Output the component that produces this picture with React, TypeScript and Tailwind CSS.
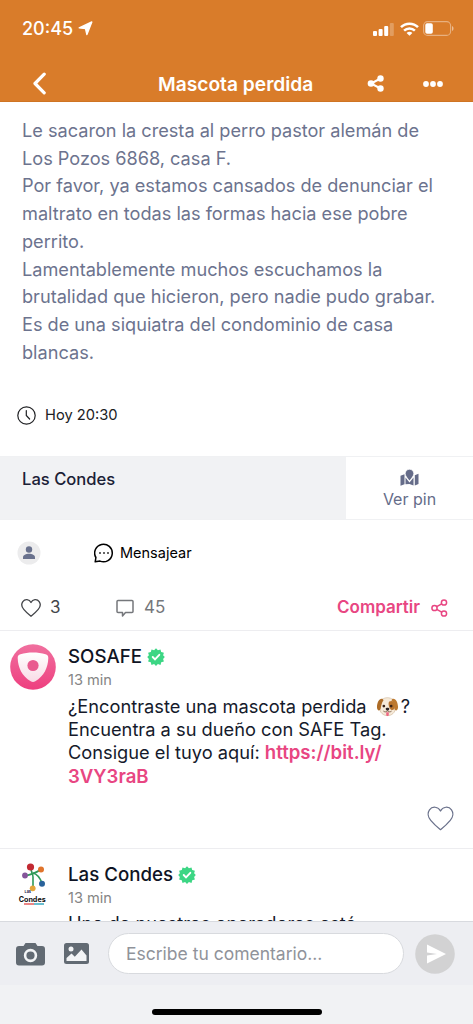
import type { ReactNode } from "react";

const postLines = [
  "Le sacaron la cresta al perro pastor alemán de",
  "Los Pozos 6868, casa F.",
  "Por favor, ya estamos cansados de denunciar el",
  "maltrato en todas las formas hacia ese pobre",
  "perrito.",
  "Lamentablemente muchos escuchamos la",
  "brutalidad que hicieron, pero nadie pudo grabar.",
  "Es de una siquiatra del condominio de casa",
  "blancas.",
];

function StatusBar() {
  return (
    <div className="flex h-[57px] items-center justify-between pl-[22px] pr-[19px]">
      <div className="flex items-center gap-[5px]">
        <span className="text-[18px] font-medium leading-6">20:45</span>
        <svg width="15" height="15" viewBox="0 0 15 15" fill="currentColor" stroke="currentColor" strokeWidth="1.4" strokeLinejoin="round">
          <path d="M13.800 1 8.900 13.600 7.500 7.600 1.200 6.900Z" />
        </svg>
      </div>
      <div className="flex items-center">
        <svg width="22" height="14" viewBox="0 0 22 14" fill="currentColor">
          <rect x="0" y="9" width="4" height="5" rx="1" />
          <rect x="5.6" y="7" width="4" height="7" rx="1" />
          <rect x="11.2" y="4" width="4" height="10" rx="1" />
          <rect x="16.8" y="1" width="4" height="13" rx="1" opacity=".25" />
        </svg>
        <svg className="ml-[5px]" width="19" height="14" viewBox="0 0 19 14" fill="none" stroke="currentColor" strokeWidth="2.5">
          <path d="M1 5.200a12 12 0 0 1 17 0" />
          <path d="M4.100 8.700a7.600 7.600 0 0 1 10.800 0" />
          <path d="M9.500 13.800 6.600 10.900a4 4 0 0 1 5.800 0Z" fill="currentColor" stroke="none" />
        </svg>
        <svg className="ml-[4px]" width="31" height="15" viewBox="0 0 31 15">
          <rect x=".6" y=".6" width="27" height="13.8" rx="4" fill="none" stroke="white" strokeOpacity=".4" strokeWidth="1.1" />
          <rect x="2.3" y="2.3" width="7.5" height="10.4" rx="1.8" fill="white" />
          <path d="M29 5v5c2-.8 2-4.200 0-5Z" fill="white" opacity=".5" />
        </svg>
      </div>
    </div>
  );
}

function Header() {
  return (
    <header className="h-[102px] shrink-0 border-b border-[#cf7423] bg-[#d97c2a] text-white">
      <StatusBar />
      <div className="flex h-[44px] items-center pl-[32px] pt-[9px]">
        <svg width="15" height="23" viewBox="0 0 15 23" fill="none" stroke="currentColor" strokeWidth="3.2" strokeLinecap="round" strokeLinejoin="round">
          <path d="M12.200 2.200 3 11.500l9.200 9.300" />
        </svg>
        <h1 className="ml-[111px] w-[156px] whitespace-nowrap text-[19.2px] font-semibold leading-6">
          Mascota perdida
        </h1>
        <svg className="ml-[53px]" width="18" height="17" viewBox="0 0 18 17" fill="currentColor" stroke="currentColor">
          <path d="M13.500 3.500 4 8.500l9.500 5" fill="none" strokeWidth="2" />
          <circle cx="13.500" cy="3.500" r="3.200" stroke="none" />
          <circle cx="4" cy="8.500" r="3.300" stroke="none" />
          <circle cx="13.500" cy="13.500" r="3.200" stroke="none" />
        </svg>
        <svg className="ml-[38px]" width="20" height="6" viewBox="0 0 20 6" fill="currentColor">
          <circle cx="3" cy="3" r="2.900" />
          <circle cx="10" cy="3" r="2.900" />
          <circle cx="17" cy="3" r="2.900" />
        </svg>
      </div>
    </header>
  );
}

function Verified() {
  return (
    <svg width="18" height="18" viewBox="0 0 18 18">
      <path
        d="m9 .3 1.900 2 2.600-.9.700 2.700 2.700.7-.8 2.500 1.700 1.700-1.700 2 .8 2.500-2.700.7-.7 2.700-2.600-.8-1.900 1.800-1.900-1.800-2.600.8-.7-2.700-2.700-.7.800-2.500L.2 9l1.700-1.700-.8-2.500 2.700-.7.700-2.700 2.600.9Z"
        fill="#3cd684"
      />
      <path d="m5.700 9 2.300 2.300 4.300-4.500" fill="none" stroke="white" strokeWidth="1.900" strokeLinecap="round" />
    </svg>
  );
}

function DogFace() {
  return (
    <svg className="ml-[4px] mr-[2px] inline-block align-[-4px]" width="23" height="20" viewBox="0 0 24 22" role="img">
      <path d="M6 3c3-3 9-3 12 0 2 2 2 6 2.500 9 .5 5-4 8.500-8.500 8.500S3 17 3.500 12C4 9 4 5 6 3Z" fill="#f6ead9" stroke="#c9ad8d" strokeWidth=".6" />
      <path d="M14 5c4-2 6 1 6 5s-2 5-4 4-4-7-2-9Z" fill="#b8742f" />
      <path d="M6.500 2C3 1 .5 6 .4 11c0 4 3 5 4 2 .7-3 1-7 3.200-9.500Z" fill="#ad6c27" />
      <path d="M17.500 2c3.500-1 6 4 6.100 9 0 4-3 5-4 2-.7-3-1-7-3.200-9.500Z" fill="#bd7a31" />
      <circle cx="8" cy="10" r="1.500" fill="#392318" />
      <circle cx="16" cy="10" r="1.500" fill="#392318" />
      <path d="M10 13c0-1.600 4-1.600 4 0 0 1.200-1.200 2.200-2 2.200s-2-1-2-2.200Z" fill="#2d2425" />
      <path d="M7.500 15.500c2 1.500 3.500.8 4.500-.2 1 1 2.500 1.700 4.500.2" fill="none" stroke="#6b4a35" strokeWidth=".9" />
      <path d="M10.600 16.800h2.800v2.800c0 1.800-2.800 1.800-2.800 0Z" fill="#ee6583" />
    </svg>
  );
}

function SosafeLogo() {
  return (
    <svg width="46" height="46" viewBox="0 0 46 46">
      <defs>
        <linearGradient id="pink" x1="0" y1="0" x2="0" y2="1">
          <stop offset="0" stopColor="#f0709f" />
          <stop offset="1" stopColor="#ee3f7f" />
        </linearGradient>
        <linearGradient id="shield" x1="0" y1="0" x2="0" y2="1">
          <stop offset="0" stopColor="#ffffff" />
          <stop offset="1" stopColor="#f9dbe6" />
        </linearGradient>
      </defs>
      <circle cx="23" cy="23" r="22.800" fill="url(#pink)" />
      <path
        d="M10.500 10.300C18 8 28 8 35.500 10.300c2 .6 2.800 1.700 2.800 3.700C38 24 34 32 25.300 37.300c-1.600 1-3 1-4.600 0C12 32 8 24 7.700 14c0-2 .8-3.100 2.800-3.700Z"
        fill="url(#shield)"
      />
      <circle cx="23" cy="21.500" r="5.600" fill="#e95b8f" />
    </svg>
  );
}

function LasCondesLogo() {
  return (
    <svg width="30" height="43" viewBox="0 0 30 43">
      <g fill="none" stroke="#2f9a58" strokeWidth="1.600">
        <path d="M13 5c0 4 2 6 2 9v11" />
        <path d="M7 13c4-1 11-3 15-6" />
        <path d="M15 10c4 1 7 5 9 10" />
      </g>
      <circle cx="12.500" cy="4" r="3.600" fill="#c22932" />
      <circle cx="23" cy="6.500" r="3" fill="#e0742c" />
      <circle cx="7" cy="12.500" r="2.900" fill="#85559a" />
      <circle cx="24" cy="20.800" r="3" fill="#29629a" />
      <circle cx="14.700" cy="25.300" r="2.900" fill="#e5a53a" />
      <text x="6.500" y="30.300" fontSize="3.800" fontWeight="700" fill="#252548" fontFamily="Inter, sans-serif">Las</text>
      <text x=".7" y="38.500" fontSize="7" fontWeight="700" fill="#111" textLength="27" lengthAdjust="spacingAndGlyphs" fontFamily="Inter, sans-serif">Condes</text>
      <path d="M6 41h10" stroke="#e45c5c" strokeWidth="1.500" />
      <path d="M16 41h10" stroke="#38a9c0" strokeWidth="1.500" />
    </svg>
  );
}

function Heart({ size }: { size: number }) {
  return (
    <svg width={size} height={size} viewBox="0 0 26 26" fill="none" stroke="currentColor" strokeLinejoin="round">
      <path
        d="M13 5.800C10.800 1.300 5 1 2.400 4.600c-2.200 3.200-1.300 7.400 1.200 10.200C6 17.700 9.400 20.900 13 23.800c3.600-2.900 7-6.100 9.400-9 2.500-2.800 3.400-7 1.200-10.200C21 1 15.200 1.300 13 5.800Z"
        strokeWidth={size > 20 ? 1.2 : 1.7}
      />
    </svg>
  );
}

interface CommentProps {
  name: string;
  logo: ReactNode;
  children: ReactNode;
}

function Comment({ name, logo, children }: CommentProps) {
  return (
    <div className="flex">
      <div className="w-[68px] shrink-0">{logo}</div>
      <div className="pt-[13px]">
        <div className="flex h-[26px] items-center gap-[5px]">
          <span className="whitespace-nowrap text-[18.7px] font-[550] text-[#0f1424]">{name}</span>
          <Verified />
        </div>
        <p className="text-[14.6px] leading-5 text-[#858585]">13 min</p>
        {children}
      </div>
    </div>
  );
}

export default function App() {
  return (
    <div className="flex h-[1024px] w-[473px] flex-col overflow-hidden bg-white font-['Inter',sans-serif]">
      <Header />

      <main className="h-[819px] shrink-0 overflow-hidden">
        {/* Post text */}
        <div className="h-[281px] whitespace-nowrap pl-[22px] pt-[15px] text-[18.15px] leading-[27.7px] text-[#6c738e]">
          {postLines.map((line) => (
            <p key={line}>{line}</p>
          ))}
        </div>

        <div className="flex h-[65px] items-center gap-[9px] pl-[17px] text-[14.7px] text-[#202124]">
          <svg width="19" height="19" viewBox="0 0 19 19" fill="none" stroke="currentColor" strokeWidth="1.2" strokeLinecap="round">
            <circle cx="9.500" cy="9.500" r="8.700" />
            <path d="M9.300 4.500v5l3.300 3.500" />
          </svg>
          <span>Hoy 20:30</span>
        </div>

        {/* Location */}
        <div className="mt-[8px] flex h-[64px] border-y border-[#f0f1f3]">
          <div className="w-[346px] bg-[#f1f2f4] pl-[22px] pt-[10px] text-[16.6px] leading-6 text-[#1b2136]">
            <span className="font-medium">Las Condes</span>
          </div>
          <div className="flex flex-1 flex-col items-center pt-[12px] text-[#656c89]">
            <svg width="19" height="17" viewBox="0 0 19 17" fill="currentColor">
              <path d="M.5 6.700 4.500 5.200v10l-4 1.500ZM14.800 6.200l3.700-1.500v10.200l-3.700 1.600ZM5.500 8.500l4 5 4-5v8l-4-1.500-4 .3Z" />
              <path
                fillRule="evenodd"
                d="M9.500.3a4.300 4.300 0 0 1 4.300 4.300c0 2.500-2.800 5.400-4.300 7.200C8 10 5.200 7.100 5.200 4.600A4.300 4.300 0 0 1 9.500.3Z"
                stroke="white"
                strokeWidth=".7"
              />
            </svg>
            <span className="mt-[3px] text-[16px] leading-5">Ver pin</span>
          </div>
        </div>

        <div className="flex h-[65px] items-center pl-[17px]">
          <svg width="24" height="24" viewBox="0 0 24 24">
            <circle cx="12" cy="12" r="11.500" fill="#ececed" />
            <circle cx="12" cy="8.500" r="3.200" fill="#69718d" />
            <path d="M6 18v-1.500c0-5 12-5 12 0V18Z" fill="#69718d" />
          </svg>
          <svg className="ml-[53px]" width="20" height="20" viewBox="0 0 20 20" fill="none" stroke="black">
            <path d="M1.200 18.800 1.900 14.500A8.800 8.800 0 1 1 6 18.100Z" strokeWidth="1.5" strokeLinejoin="round" />
            <path d="M5.200 10h1.600M9.200 10h1.600M13.200 10h1.600" strokeWidth="1.5" />
          </svg>
          <span className="ml-[6px] text-[14.5px] text-black">Mensajear</span>
        </div>

        <div className="flex h-[46px] items-center border-b border-[#ededf0] pl-[21px] text-[17px]">
          <span className="flex w-[95px] items-center gap-[9px] text-[#44464a]">
            <Heart size={20} />3
          </span>
          <span className="flex w-[221px] items-center gap-[10px] text-[#75777b]">
            <svg width="18" height="18" viewBox="0 0 18 18" fill="none" stroke="currentColor" strokeWidth="1.5" strokeLinejoin="round">
              <path d="M2 1.500h14q1 0 1 1v10q0 1-1 1h-6.500L6.500 17v-3.500H2q-1 0-1-1v-10q0-1 1-1Z" />
            </svg>
            45
          </span>
          <span className="flex items-center gap-[11px] whitespace-nowrap font-semibold text-[#e84682]">
            Compartir
            <svg width="17" height="18" viewBox="0 0 17 18" fill="none" stroke="currentColor" strokeWidth="1.5">
              <circle cx="13" cy="3.500" r="2.600" />
              <circle cx="3.500" cy="9" r="2.600" />
              <circle cx="13" cy="14.500" r="2.600" />
              <path d="m5.700 7.700 5-2.900M5.700 10.300l5 2.900" />
            </svg>
          </span>
        </div>

        {/* Comments */}
        <section className="h-[218px] border-b border-[#ededf0]">
          <Comment name="SOSAFE" logo={<div className="pl-[10px] pt-[13px]"><SosafeLogo /></div>}>
            <div className="mt-[5px] whitespace-nowrap text-[18.25px] leading-[23.2px] text-[#151a2b]">
              <p className="h-[23.2px]">¿Encontraste una mascota perdida <DogFace />?</p>
              <p>Encuentra a su dueño con SAFE Tag.</p>
              <p>
                Consigue el tuyo aquí: <a className="text-[18.6px] font-semibold text-[#e84682]">https://bit.ly/</a>
              </p>
              <p><a className="text-[18.6px] font-semibold text-[#e84682]">3VY3raB</a></p>
            </div>
          </Comment>
          <div className="flex justify-end pr-[19px] pt-[17px] text-[#6a718b]">
            <Heart size={27} />
          </div>
        </section>

        <Comment name="Las Condes" logo={<div className="pl-[18px] pt-[14px]"><LasCondesLogo /></div>}>
          <p className="mt-[4px] whitespace-nowrap text-[18.25px] leading-[23.2px] text-[#151a2b]">
            Uno de nuestros operadores está
          </p>
        </Comment>
      </main>

      <footer className="h-[103px] shrink-0 bg-[#f1f2f4]">
        <div className="flex h-[64px] items-center border-t border-[#d8dadf] bg-[#edeef2] pl-[16px]">
          <svg width="29" height="24" viewBox="0 0 29 24">
            <path d="M9.500 1h10l2 3H26q3 0 3 3v13.500q0 3-3 3H3q-3 0-3-3V7q0-3 3-3h4.500Z" fill="#626a73" />
            <circle cx="14.500" cy="13.500" r="5.400" fill="none" stroke="#f3f4f6" strokeWidth="2.6" />
          </svg>
          <svg className="ml-[19px]" width="25" height="21" viewBox="0 0 25 21">
            <rect width="25" height="21" rx="2.500" fill="#626a73" />
            <circle cx="7" cy="6" r="2.500" fill="#f3f4f6" />
            <path d="M2.500 18v-3L7.500 10.500l3.300 3.300 6.700-7.300 5 6V18Z" fill="#f3f4f6" />
          </svg>
          <input
            className="ml-[19px] h-[41px] w-[296px] rounded-full border border-[#d8dade] bg-white px-[17px] text-[17.5px] outline-none placeholder:text-[#90939a]"
            placeholder="Escribe tu comentario..."
          />
          <svg className="ml-[11px]" width="40" height="40" viewBox="0 0 40 40">
            <circle cx="20" cy="20" r="19.800" fill="#d2d2d3" />
            <path d="M12 10.500 31 20 12 29.500V21.500l10-1.500-10-1.500Z" fill="white" />
          </svg>
        </div>
        <div className="mx-auto mt-[24px] h-[6px] w-[170px] rounded-full bg-black" />
      </footer>
    </div>
  );
}
